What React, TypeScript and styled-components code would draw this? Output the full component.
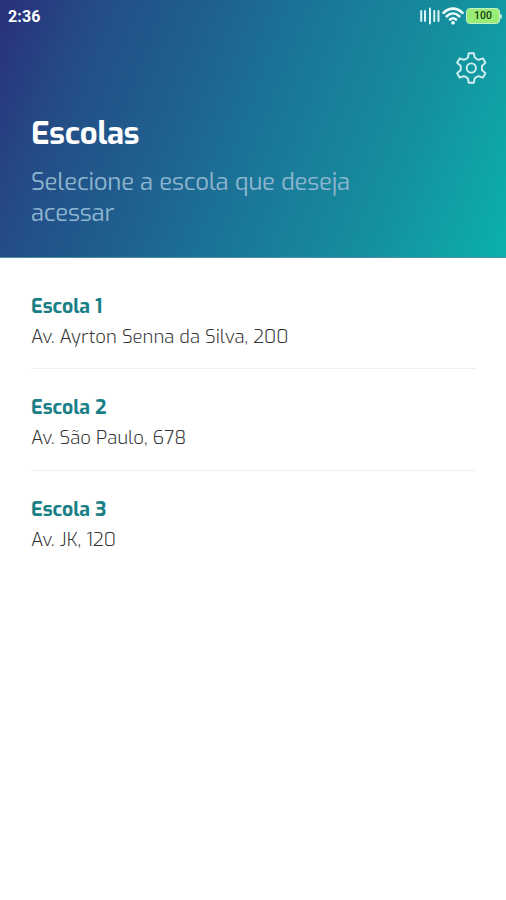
import React from "react";
import styled, { createGlobalStyle } from "styled-components";

const GlobalStyle = createGlobalStyle`
  * { box-sizing: border-box; }
  body { margin: 0; background: #fff; font-family: Exo, "Exo 2", Roboto, sans-serif; }
`;

const Screen = styled.div`
  width: 506px;
  height: 900px;
  overflow: hidden;
  background: #fff;
`;

const Header = styled.header`
  height: 258px;
  background: linear-gradient(111deg, #2a2f7c 0%, #244c86 16%, #1e6190 36%, #1a7698 53%, #158f9d 76%, #0bb1ac 100%);
  border-bottom: 1px solid #4c91a3;
`;

const StatusBar = styled.div`
  height: 32px;
  display: flex;
  align-items: center;
  justify-content: space-between;
  padding: 0 4px 0 8px;
  color: #fff;
`;

const Clock = styled.time`
  padding-top: 1px;
  font: 700 16px/18px Roboto, sans-serif;
  letter-spacing: 0.1px;
`;

const Indicators = styled.div`
  display: flex;
  align-items: center;
  gap: 2px;
`;

const Battery = styled.div`
  display: flex;
  align-items: center;
`;

const BatteryBody = styled.div`
  width: 34px;
  height: 16px;
  border: 1px solid #c6f2ca;
  border-radius: 4px;
  background: #98ee74;
  color: #173b12;
  font: 500 10.5px/14px Roboto, sans-serif;
  text-align: center;
`;

const BatteryTip = styled.div`
  width: 2px;
  height: 5px;
  border-radius: 0 2px 2px 0;
  background: #b9e9d2;
`;

const Toolbar = styled.div`
  display: flex;
  justify-content: flex-end;
  padding: 19px 18px 0 0;
  height: 85px;
`;

const IconButton = styled.button`
  width: 34px;
  height: 34px;
  padding: 0;
  border: 0;
  background: none;
  color: #d5f0f2;
`;

const Title = styled.h1`
  margin: 0 31px;
  color: #fff;
  font-size: 31px;
  line-height: 34px;
  font-weight: 700;
  letter-spacing: -0.2px;
`;

const Subtitle = styled.p`
  width: 350px;
  margin: 16px 0 0 31px;
  color: #8eb5cf;
  font-size: 24px;
  line-height: 31px;
  font-weight: 400;
  letter-spacing: -0.25px;
`;

const List = styled.ul`
  margin: 0;
  padding: 10px 30px 0 31px;
  list-style: none;
`;

const School = styled.li`
  height: 101.3px;
  padding-top: 26px;
  border-bottom: 1px solid #efefef;

  &:last-child { border-bottom: 0; }
`;

const SchoolName = styled.h2`
  margin: 0;
  color: #188086;
  font-size: 19.5px;
  line-height: 24px;
  font-weight: 700;
`;

const Address = styled.p`
  margin: 7px 0 0;
  color: #333;
  font-size: 18.5px;
  line-height: 24px;
  font-weight: 300;
`;

const schools = [
  { name: "Escola 1", address: "Av. Ayrton Senna da Silva, 200" },
  { name: "Escola 2", address: "Av. São Paulo, 678" },
  { name: "Escola 3", address: "Av. JK, 120" },
];

const SignalIcon = () => (
  <svg width="20" height="20" viewBox="0 0 20 20" stroke="#d9f4f5" strokeWidth="2" strokeLinecap="round">
    <path d="M1.2 5V15M5 5V15M10 2.5V17.5M14.3 5V15M18.5 5V15" />
  </svg>
);

const WifiIcon = () => (
  <svg width="22" height="20" viewBox="0 0 22 20" fill="none" stroke="#eefbff" strokeWidth="2.6" strokeLinecap="round">
    <path d="M1.5 6.8C7 1.2 15 1.2 20.5 6.8M4.7 10.3C8.5 6.6 13.5 6.6 17.3 10.3M8 13.5C9.9 11.9 12.1 11.9 14 13.5" />
    <circle cx="11" cy="16.8" r="1.4" fill="#eefbff" strokeWidth="1" />
  </svg>
);

const gearPath = () => {
  const tooth = [[-2.6, -14.8], [2.6, -14.8], [3.4, -10.4], [6, -8.4]];
  const turn = ([x, y]: number[], step: number) => {
    const a = (step * Math.PI) / 3;
    return `${(x * Math.cos(a) - y * Math.sin(a)).toFixed(2)} ${(x * Math.sin(a) + y * Math.cos(a)).toFixed(2)}`;
  };
  const parts = Array.from({ length: 6 }, (_, i) => {
    const [a, b, c, d] = tooth.map((p) => turn(p, i));
    const next = turn([-3.4, -10.4], i + 1);
    return `${i ? "L" : "M"}${a}L${b}L${c}Q${d} ${next}`;
  });
  return `${parts.join("")}Z`;
};

const GearIcon = () => (
  <svg width="34" height="34" viewBox="-17.3 -17 34 34" fill="none" stroke="currentColor" strokeWidth="1.9" strokeLinejoin="round">
    <path d={gearPath()} />
    <circle r="4.6" />
  </svg>
);

export default function App() {
  return (
    <Screen>
      <GlobalStyle />
      <Header>
        <StatusBar>
          <Clock>2:36</Clock>
          <Indicators>
            <SignalIcon />
            <WifiIcon />
            <Battery>
              <BatteryBody>100</BatteryBody>
              <BatteryTip />
            </Battery>
          </Indicators>
        </StatusBar>
        <Toolbar>
          <IconButton aria-label="Configurações"><GearIcon /></IconButton>
        </Toolbar>
        <Title>Escolas</Title>
        <Subtitle>Selecione a escola que deseja acessar</Subtitle>
      </Header>
      <List>
        {schools.map((s) => (
          <School key={s.name}>
            <SchoolName>{s.name}</SchoolName>
            <Address>{s.address}</Address>
          </School>
        ))}
      </List>
    </Screen>
  );
}
